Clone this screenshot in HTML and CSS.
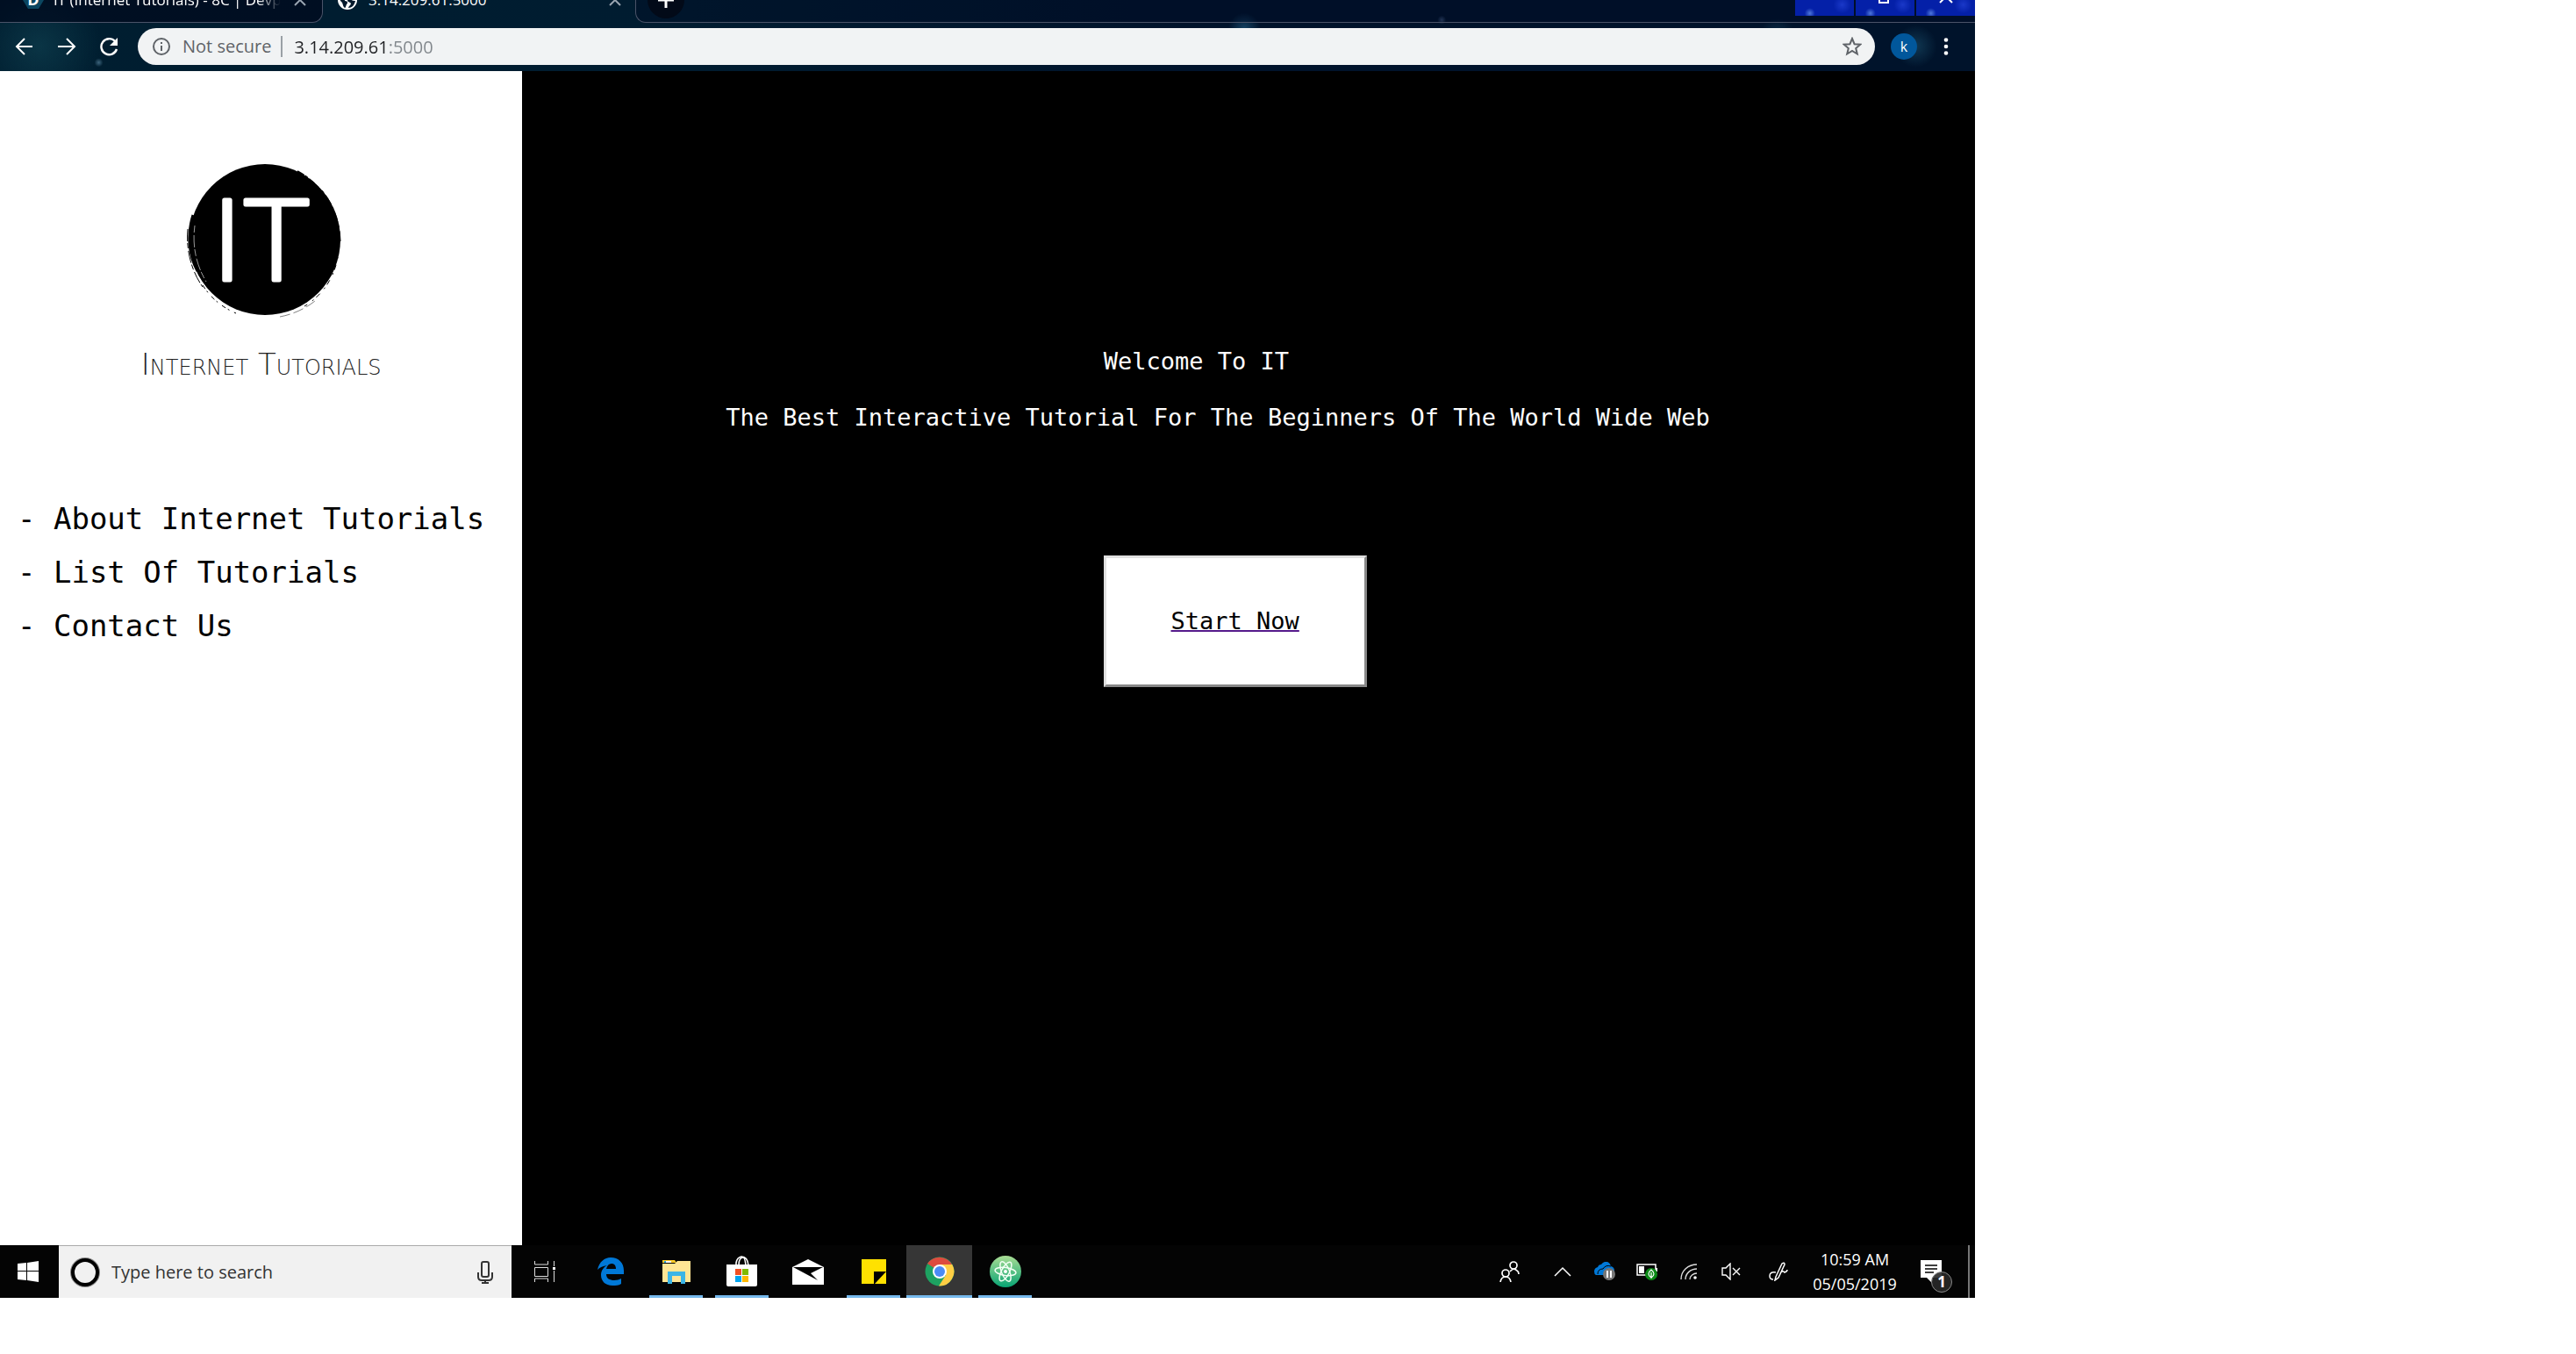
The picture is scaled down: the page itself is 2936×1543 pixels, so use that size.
FILE: index.html
```html
<!DOCTYPE html>
<html lang="en">
<head>
    <meta charset="utf-8">
    <title>Internet Tutorials</title>
    <link rel="stylesheet" href="styles.css">
</head>
<body>
    <div class="desktop">
        <header class="browser">
            <div class="tabs">
                <div class="tab tab-left">
                    <svg class="favicon" width="26" height="26" viewBox="0 0 26 26">
                        <path d="M7 2h12l6 11-6 10H7L1 13z" fill="#0b4660"/>
                        <text class="fav-letter" x="13" y="19" text-anchor="middle">D</text>
                    </svg>
                    <span class="tab-name fade">IT (Internet Tutorials) - 8C | Devpost</span>
                    <button class="icon-btn" aria-label="Close tab">
                        <svg width="14" height="14" viewBox="0 0 14 14"><path d="M1 1l12 12M13 1L1 13" stroke="#9aa5b1" stroke-width="2"/></svg>
                    </button>
                </div>
                <div class="tab tab-active">
                    <svg class="favicon" width="24" height="24" viewBox="0 0 24 24">
                        <circle cx="12" cy="12" r="11" fill="#fff"/>
                        <path d="M3 9c3 0 6 1 6 4 3 0 4 2 2 4-1 2-1 4-2 4-2-1-2-4-3-6-2-2-3-3-3-6zM12 4c2 2 1 4 3 5 0 3 3 4 6 4-1 5-4 8-8 8 0-2 3-3 3-5-1-2-3-1-4-3 1-3 1-5 0-9z" fill="#04182b"/>
                    </svg>
                    <span class="tab-name">3.14.209.61:5000</span>
                    <button class="icon-btn" aria-label="Close tab">
                        <svg width="14" height="14" viewBox="0 0 14 14"><path d="M1 1l12 12M13 1L1 13" stroke="#9aa5b1" stroke-width="2"/></svg>
                    </button>
                </div>
                <div class="tab-rest">
                    <button class="new-tab" aria-label="New tab">
                        <svg width="18" height="18" viewBox="0 0 18 18"><path d="M9 0v18M0 9h18" stroke="#fff" stroke-width="3"/></svg>
                    </button>
                    <div class="win-buttons">
                        <button class="win-btn" aria-label="Minimize"></button>
                        <button class="win-btn" aria-label="Restore">
                            <svg width="16" height="16" viewBox="0 0 16 16"><path d="M1 5h10v10H1zM5 5V1h10v10h-4" fill="none" stroke="#fff" stroke-width="2"/></svg>
                        </button>
                        <button class="win-btn" aria-label="Close">
                            <svg width="16" height="16" viewBox="0 0 16 16"><path d="M1 1l14 14M15 1L1 15" stroke="#fff" stroke-width="2"/></svg>
                        </button>
                    </div>
                </div>
            </div>

            <div class="toolbar">
                <button class="nav-btn" aria-label="Back">
                    <svg width="22" height="22" viewBox="0 0 22 22"><path d="M20 11H2M11 2l-9 9 9 9" fill="none" stroke="#fff" stroke-width="2"/></svg>
                </button>
                <button class="nav-btn" aria-label="Forward">
                    <svg width="22" height="22" viewBox="0 0 22 22"><path d="M1 11h19M11 2l9 9-9 9" fill="none" stroke="#fff" stroke-width="2"/></svg>
                </button>
                <button class="nav-btn" aria-label="Reload">
                    <svg width="22" height="22" viewBox="0 0 22 22"><path d="M18 5a9 9 0 1 0 2 9" fill="none" stroke="#fff" stroke-width="2.4"/><path d="M21 1v9h-9z" fill="#fff"/></svg>
                </button>
                <div class="address">
                    <svg width="20" height="20" viewBox="0 0 20 20"><circle cx="10" cy="10" r="9" fill="none" stroke="#5f6368" stroke-width="2"/><path d="M10 9v6M10 5v2" stroke="#5f6368" stroke-width="2"/></svg>
                    <label class="not-secure" for="url">Not secure</label>
                    <input class="url" type="text" id="url" value="3.14.209.61:5000">
                    <button class="icon-btn" aria-label="Bookmark">
                        <svg width="22" height="22" viewBox="0 0 22 22"><path d="M11 2l2.600 6.200 6.700.500-5.100 4.300 1.600 6.500L11 16l-5.800 3.500 1.600-6.500-5.100-4.300 6.700-.500z" fill="none" stroke="#5f6368" stroke-width="2"/></svg>
                    </button>
                </div>
                <button class="avatar">k</button>
                <button class="dots" aria-label="Menu">
                    <svg width="6" height="20" viewBox="0 0 6 20"><g fill="#fff"><circle cx="3" cy="2.500" r="2.300"/><circle cx="3" cy="10" r="2.300"/><circle cx="3" cy="17.500" r="2.300"/></g></svg>
                </button>
            </div>
        </header>

        <div class="page">
            <aside class="sidebar">
                <svg class="logo" width="198" height="180" viewBox="-8 0 198 180">
                    <circle cx="95" cy="90" r="86"/>
                    <g fill="none" stroke="#000">
                        <path d="M13 62C6 84 8 108 18 126" stroke-width="3"/>
                        <path d="M7 78C5 100 10 124 24 144" stroke-width="1" stroke-dasharray="14 2 6 3"/>
                        <path d="M24 142C34 158 48 168 62 174" stroke-width="1" stroke-dasharray="5 3 2 6"/>
                        <path d="M132 12C150 22 164 38 171 56" stroke-width="2" stroke-dasharray="9 1 4 2"/>
                        <path d="M160 34C172 48 180 68 181 92" stroke-width="1" stroke-dasharray="3 4 12 3"/>
                        <path d="M178 110C174 134 160 154 140 166" stroke-width="1" stroke-dasharray="2 7 6 4"/>
                        <path d="M112 178C128 175 142 168 152 160" stroke-width="1" stroke-dasharray="12 4" stroke-opacity="0.5"/>
                    </g>
                    <path d="M15 74C12 96 16 118 28 138" fill="none" stroke="#fff" stroke-opacity="0.6" stroke-width="1" stroke-dasharray="8 3 14 2"/>
                    <g class="logo-letters">
                        <text x="52" y="136">I</text>
                        <text x="108" y="136">T</text>
                    </g>
                </svg>
                <h1 class="brand">Internet Tutorials</h1>
                <nav class="menu">
                    <a href="#about">- About Internet Tutorials</a>
                    <a href="#list">- List Of Tutorials</a>
                    <a href="#contact">- Contact Us</a>
                </nav>
            </aside>
            <main class="content">
                <p class="welcome">Welcome To IT</p>
                <p class="tagline">The Best Interactive Tutorial For The Beginners Of The World Wide Web</p>
                <a class="start" href="#start"><span>Start Now</span></a>
            </main>
        </div>

        <footer class="taskbar">
            <button class="start-menu" aria-label="Start">
                <svg width="24" height="24" viewBox="0 0 24 24"><path d="M0 3l10-1v9H0zM11 2l13-2v11H11zM0 12h10v10L0 21zM11 12h13v12l-13-2z" fill="#fff"/></svg>
            </button>
            <div class="search">
                <svg width="36" height="36" viewBox="0 0 36 36"><circle cx="18" cy="18" r="15.500" fill="none" stroke="#888" stroke-width="3"/><circle cx="18" cy="18" r="14" fill="#f1f1f1" stroke="#000" stroke-width="4"/></svg>
                <input class="search-box" type="text" aria-label="Search" placeholder="Type here to search">
                <svg width="18" height="26" viewBox="0 0 18 26"><g fill="none" stroke="#333" stroke-width="2"><rect x="5" y="1" width="8" height="17" rx="2"/><path d="M1 13v5q0 4 4 4h8q4 0 4-4v-5M9 22v3M5 25h8"/></g></svg>
            </div>
            <button class="app" aria-label="Task view">
                <svg width="26" height="26" viewBox="0 0 26 26"><g fill="none" stroke="#ddd" stroke-width="1"><path d="M1.500 1v4h15V1M1.500 25v-4h15v4M1.500 8.500h15v10h-15zM23.500 1v6M23.500 12v13"/></g><path d="M22 8h3v3h-3z" fill="#fff"/></svg>
            </button>
            <button class="app" aria-label="Edge">
                <svg width="32" height="34" viewBox="0 0 32 34"><path d="M1 15C3 6 9 1 16 1c9 0 15 6 15 15v4H11c0 5 4 7 9 7 3 0 6-1 8-2v6c-3 2-6 2-10 2C10 33 5 28 5 21c0-5 3-9 7-11-5 1-8 2-11 5zM11 14h11c0-4-2-6-5-6s-5 2-6 6z" fill="#0078d7" fill-rule="evenodd"/></svg>
            </button>
            <button class="app open" aria-label="File Explorer">
                <svg width="32" height="28" viewBox="0 0 32 28"><path d="M0 1h14l2 3H0z" fill="#ffca28"/><path d="M0 5h14l3-3h15v24H0z" fill="#ffe594"/><path d="M2 2h8v2H2z" fill="#fff"/><path d="M2 2h2v2H2z" fill="#29a3dc"/><path d="M6 14h20v14h-5v-9H11v9H6z" fill="#3bb5e6"/></svg>
            </button>
            <button class="app open" aria-label="Store">
                <svg width="36" height="36" viewBox="0 0 36 36"><path d="M11 11V8q1-6 6-7 7 0 8 10M14 11q0-9 5-9 2 0 3 9" fill="none" stroke="#fff" stroke-width="1.600"/><path d="M0 10h35v23q0 2-2 2H2q-2 0-2-2z" fill="#fff"/><path d="M10 15h7v7h-7z" fill="#f25022"/><path d="M18 15h7v7h-7z" fill="#7fba00"/><path d="M10 23h7v7h-7z" fill="#00a4ef"/><path d="M18 23h7v7h-7z" fill="#ffb900"/></svg>
            </button>
            <button class="app" aria-label="Mail">
                <svg width="36" height="30" viewBox="0 0 36 30"><path d="M0 10L18 1l18 9v20H0z" fill="#fff"/><path d="M1 10h34l-14 7 8 8z" fill="#000"/></svg>
            </button>
            <button class="app open" aria-label="Sticky Notes">
                <svg width="28" height="28" viewBox="0 0 28 28"><path d="M0 0h28v28H0z" fill="#ffe100"/><path d="M14 14h14L15 28h-1z" fill="#000"/></svg>
            </button>
            <button class="app open current" aria-label="Chrome">
                <svg width="34" height="34" viewBox="0 0 34 34"><circle cx="17" cy="17" r="16.500" fill="#1da261"/><path d="M17 17L3 8A16.500 16.500 0 0 1 31 9H17z" fill="#dd4b3e"/><path d="M17 9h14.300A16.500 16.500 0 0 1 16 33.500L24 21z" fill="#ffce44"/><circle cx="17" cy="17" r="8" fill="#fff"/><circle cx="17" cy="17" r="6" fill="#4c8bf5"/></svg>
            </button>
            <button class="app open" aria-label="Atom">
                <svg width="36" height="36" viewBox="0 0 36 36">
                    <defs><linearGradient id="atom" x1="0" y1="0" x2="0" y2="1"><stop offset="0" stop-color="#a9dd94"/><stop offset="1" stop-color="#08a474"/></linearGradient></defs>
                    <circle cx="18" cy="18" r="18" fill="url(#atom)"/>
                    <g fill="none" stroke="#f2fff4" stroke-width="1.500"><ellipse cx="18" cy="18" rx="12" ry="4.500" transform="rotate(8 18 18)"/><ellipse cx="18" cy="18" rx="12" ry="4.500" transform="rotate(68 18 18)"/><ellipse cx="18" cy="18" rx="12" ry="4.500" transform="rotate(118 18 18)"/></g>
                    <circle cx="18" cy="18" r="2" fill="#fff"/>
                </svg>
            </button>

            <div class="tray">
                <button class="tray-btn people" aria-label="People">
                    <svg width="24" height="24" viewBox="0 0 24 24"><g fill="none" stroke="#fff" stroke-width="1.700"><circle cx="16" cy="5" r="4"/><path d="M12 12q4-5 8-1 2 1 2 4"/><circle cx="7" cy="14" r="4"/><path d="M1 24q1-6 6-6t6 6"/></g></svg>
                </button>
                <button class="tray-btn" aria-label="Show hidden icons">
                    <svg width="20" height="12" viewBox="0 0 20 12"><path d="M1 11l9-9 9 9" fill="none" stroke="#fff" stroke-width="1.500"/></svg>
                </button>
                <button class="tray-btn" aria-label="OneDrive">
                    <svg width="24" height="22" viewBox="0 0 24 22"><path d="M0 11q0-4 4-5 1-3 4-3 3-4 7-3 3 1 4 5 4 1 4 5v5H2q-2-1-2-4z" fill="#0078d7"/><path d="M4 14q0-6 6-6 3-5 9-3" fill="none" stroke="#000" stroke-width="1"/><circle cx="17" cy="14" r="7" fill="#777"/><path d="M15 10v8M19 10v8" stroke="#fff" stroke-width="2"/></svg>
                </button>
                <button class="tray-btn" aria-label="Battery">
                    <svg width="24" height="22" viewBox="0 0 24 22"><path d="M1 3h21v12H1z" fill="none" stroke="#fff" stroke-width="1.500"/><path d="M3 5h6v8H3zM22 7h2v4h-2z" fill="#fff"/><circle cx="17" cy="14" r="7" fill="#0b8a16"/><path d="M17 9q-6 5 0 9 6-4 0-9zM17 12v7" fill="none" stroke="#fff" stroke-width="1.200"/></svg>
                </button>
                <button class="tray-btn" aria-label="Network">
                    <svg width="20" height="20" viewBox="0 0 20 20"><g fill="none" stroke="#ddd" stroke-width="1.400"><path d="M1 19C1 9 9 2 19 2M6 19C6 12 12 7 19 7M11 19c0-4 4-7 8-7"/></g><circle cx="17" cy="17" r="1.800" fill="#fff"/></svg>
                </button>
                <button class="tray-btn" aria-label="Volume muted">
                    <svg width="22" height="20" viewBox="0 0 22 20"><path d="M1 6h4l5-5v18l-5-5H1zM13 6l8 8M21 6l-8 8" fill="none" stroke="#fff" stroke-width="1.400"/></svg>
                </button>
                <button class="tray-btn pen" aria-label="Windows Ink">
                    <svg width="22" height="22" viewBox="0 0 22 22"><path d="M8 17L15 2q3-2 3 1l-7 15-4 3zM8 12q-7-1-7 4 0 4 4 4M13 13q3-4 5-1 3-1 3-3" fill="none" stroke="#fff" stroke-width="1.500"/></svg>
                </button>
                <div class="clock">
                    <span>10:59 AM</span>
                    <span>05/05/2019</span>
                </div>
                <button class="notice" aria-label="Notifications">
                    <svg width="26" height="28" viewBox="0 0 26 28"><path d="M1 1h24v20H14v6l-6-6H1z" fill="#fff"/><path d="M6 7h14M6 11h14M6 15h10" stroke="#000" stroke-width="1.500"/></svg>
                    <span class="badge">1</span>
                </button>
                <div class="show-desktop"></div>
            </div>
        </footer>
    </div>
</body>
</html>
```
FILE: styles.css
```css
*{box-sizing: border-box;}

body{
    margin: 0;
    background-color: white;
    font-family: "Open Sans", sans-serif;
    font-size: 20px;
}

button{
    padding: 0;
    border: none;
    background: none;
    color: white;
    font-family: inherit;
}

svg{display: block;}

.desktop{
    display: flex;
    flex-direction: column;
    width: 76.67%;
    min-height: calc(100vh - 64px);
    overflow: hidden;
}

/* browser frame */
.browser{
    background-color: #00152c;
    background-image:
        radial-gradient(circle at 5% 88%, rgba(120, 170, 200, 0.5) 0, transparent 5px),
        radial-gradient(circle at 90% 50%, rgba(40, 110, 140, 0.3) 0, transparent 20px),
        radial-gradient(circle at 97% 65%, rgba(40, 110, 140, 0.4) 0, transparent 24px),
        radial-gradient(circle at 63% 40%, rgba(40, 110, 150, 0.5) 0, transparent 18px),
        radial-gradient(circle at 73% 28%, rgba(120, 150, 200, 0.4) 0, transparent 5px),
        radial-gradient(circle at 2% 65%, rgba(20, 75, 90, 0.5) 0, transparent 70px),
        linear-gradient(90deg, #001e30, #001c30 35%, #00132b 60%);
    overflow: hidden;
}

/* the top half of the strip is off screen */
.tabs{
    display: flex;
    height: 52px;
    margin-top: -26px;
}

.tab{
    display: flex;
    align-items: center;
}

.tab-left{
    width: 368px;
    padding: 0 18px 0 25px;
    gap: 10px;
    background-color: rgba(0, 8, 28, 0.7);
    border-right: 1px solid #4a5368;
    border-bottom: 1px solid #4a5368;
    border-bottom-right-radius: 12px;
}

.tab-active{
    width: 356px;
    padding: 0 16px;
    gap: 12px;
}

.tab-name{
    flex: 1;
    font-size: 17px;
    line-height: 24px;
    color: white;
    white-space: nowrap;
    overflow: hidden;
}

.fade{
    -webkit-mask-image: linear-gradient(90deg, #000 88%, transparent 98%);
    mask-image: linear-gradient(90deg, #000 88%, transparent 98%);
}

.favicon{flex: none;}

.fav-letter{
    font-size: 18px;
    font-weight: bold;
    fill: white;
}

.tab-rest{
    flex: 1;
    display: flex;
    align-items: center;
    justify-content: space-between;
    padding-left: 13px;
    background-color: rgba(0, 8, 32, 0.3);
    border-left: 1px solid #4a5368;
    border-bottom: 1px solid #4a5368;
    border-bottom-left-radius: 12px;
}

.new-tab{
    display: flex;
    align-items: center;
    justify-content: center;
    width: 42px;
    height: 42px;
    border-radius: 50%;
    background-color: #020a18;
}

.win-buttons{
    display: flex;
    gap: 2px;
}

.win-btn{
    display: flex;
    align-items: center;
    justify-content: center;
    width: 67px;
    height: 36px;
    padding-bottom: 8px;
    background-color: #0420a8;
    background-image:
        radial-gradient(circle at 25% 92%, rgba(108, 156, 240, 0.7) 0, transparent 6px),
        radial-gradient(circle at 80% 65%, #1a38c8 0, transparent 10px);
}

.toolbar{
    display: flex;
    align-items: center;
    padding: 6px 30px 7px 4px;
}

.nav-btn{
    display: flex;
    justify-content: center;
    width: 48px;
}

.address{
    flex: 1;
    display: flex;
    align-items: center;
    height: 42px;
    margin-left: 9px;
    padding: 0 15px 0 17px;
    border-radius: 21px;
    background-color: #f1f3f4;
}

.not-secure{
    margin-left: 14px;
    padding-right: 11px;
    border-right: 2px solid #9aa0a6;
    line-height: 24px;
    color: #5f6368;
}

/* host is dark, port is grey */
.url{
    flex: 1;
    padding: 0 0 0 13px;
    border: none;
    font-family: inherit;
    font-size: 20px;
    color: transparent;
    background-image: linear-gradient(90deg, #202124 121px, #80868b 121px);
    -webkit-background-clip: text;
    background-clip: text;
}

.avatar{
    width: 30px;
    height: 30px;
    margin: 0 30px 0 18px;
    border-radius: 50%;
    background-color: #01579b;
    font-size: 16px;
}

/* web page */
.page{
    flex: 1;
    display: flex;
    background-color: black;
    font-family: "DejaVu Sans Mono", monospace;
}

.sidebar{
    width: 26.45%;
    padding-top: 102px;
    background-color: white;
}

.logo{margin: 0 auto;}

.logo-letters{
    font-family: "DejaVu Sans Light", "DejaVu Sans", sans-serif;
    font-weight: 200;
    font-size: 124px;
    text-anchor: middle;
    fill: white;
    stroke: white;
    stroke-width: 5px;
    stroke-linejoin: round;
}

.brand{
    margin: 30px 0 124px;
    font-family: "DejaVu Sans Light", "DejaVu Sans Condensed", sans-serif;
    font-size: 34px;
    font-weight: 200;
    font-variant: small-caps;
    line-height: 44px;
    text-align: center;
    color: #222;
}

.menu{
    display: flex;
    flex-direction: column;
    padding-left: 20px;
}

.menu a{
    font-size: 34px;
    line-height: 61px;
    color: black;
    text-decoration: none;
    white-space: nowrap;
}

.content{
    flex: 1;
    padding-top: 315px;
    color: white;
    font-size: 27px;
    line-height: 32px;
}

.welcome{
    margin: 0 0 32px;
    padding-left: 40%;
}

.tagline{
    margin: 0;
    padding-left: 14%;
}

.start{
    display: flex;
    align-items: center;
    justify-content: center;
    width: 300px;
    height: 150px;
    margin: 141px 0 0 40%;
    border: 3px solid;
    border-color: #e0e0e0 #888 #888 #e0e0e0;
    background-color: white;
    color: black;
    text-decoration: underline;
    text-decoration-color: #551a8b;
    text-decoration-thickness: 2px;
}

/* taskbar */
.taskbar{
    display: flex;
    height: 60px;
    background-color: #040404;
}

.start-menu{
    width: 67px;
    padding-right: 4px;
    display: flex;
    align-items: center;
    justify-content: center;
}

.search{
    display: flex;
    align-items: center;
    width: 516px;
    padding: 0 21px 0 12px;
    border-top: 1px solid #aaa;
    background-color: #f1f1f1;
}

.search-box{
    flex: 1;
    padding: 0 0 0 12px;
    border: none;
    background: none;
    font-family: inherit;
    font-size: 20px;
}

.search-box::placeholder{color: #333;}

.app{
    display: flex;
    align-items: center;
    justify-content: center;
    width: 75px;
}

.open{
    background: linear-gradient(#76b9ed, #76b9ed) center bottom / 61px 3px no-repeat;
}

.current{
    background-color: #363636;
    background-size: 100% 3px;
}

.tray{
    display: flex;
    margin-left: auto;
    padding-right: 6px;
}

.tray-btn{
    width: 48px;
    display: flex;
    align-items: center;
    justify-content: center;
}

.people{width: 72px;}

.pen{width: 60px;}

.clock{
    display: flex;
    flex-direction: column;
    justify-content: center;
    width: 114px;
    font-size: 18px;
    line-height: 28px;
    text-align: center;
    color: white;
}

.notice{
    position: relative;
    width: 60px;
    display: flex;
    align-items: center;
    justify-content: center;
}

.badge{
    position: absolute;
    right: 6px;
    bottom: 6px;
    width: 24px;
    height: 24px;
    border: 1px solid #888;
    border-radius: 50%;
    background-color: rgba(40, 40, 40, 0.9);
    font-size: 17px;
    font-weight: bold;
    line-height: 22px;
}

.show-desktop{
    width: 2px;
    margin-left: 12px;
    background-color: #777;
}
```
